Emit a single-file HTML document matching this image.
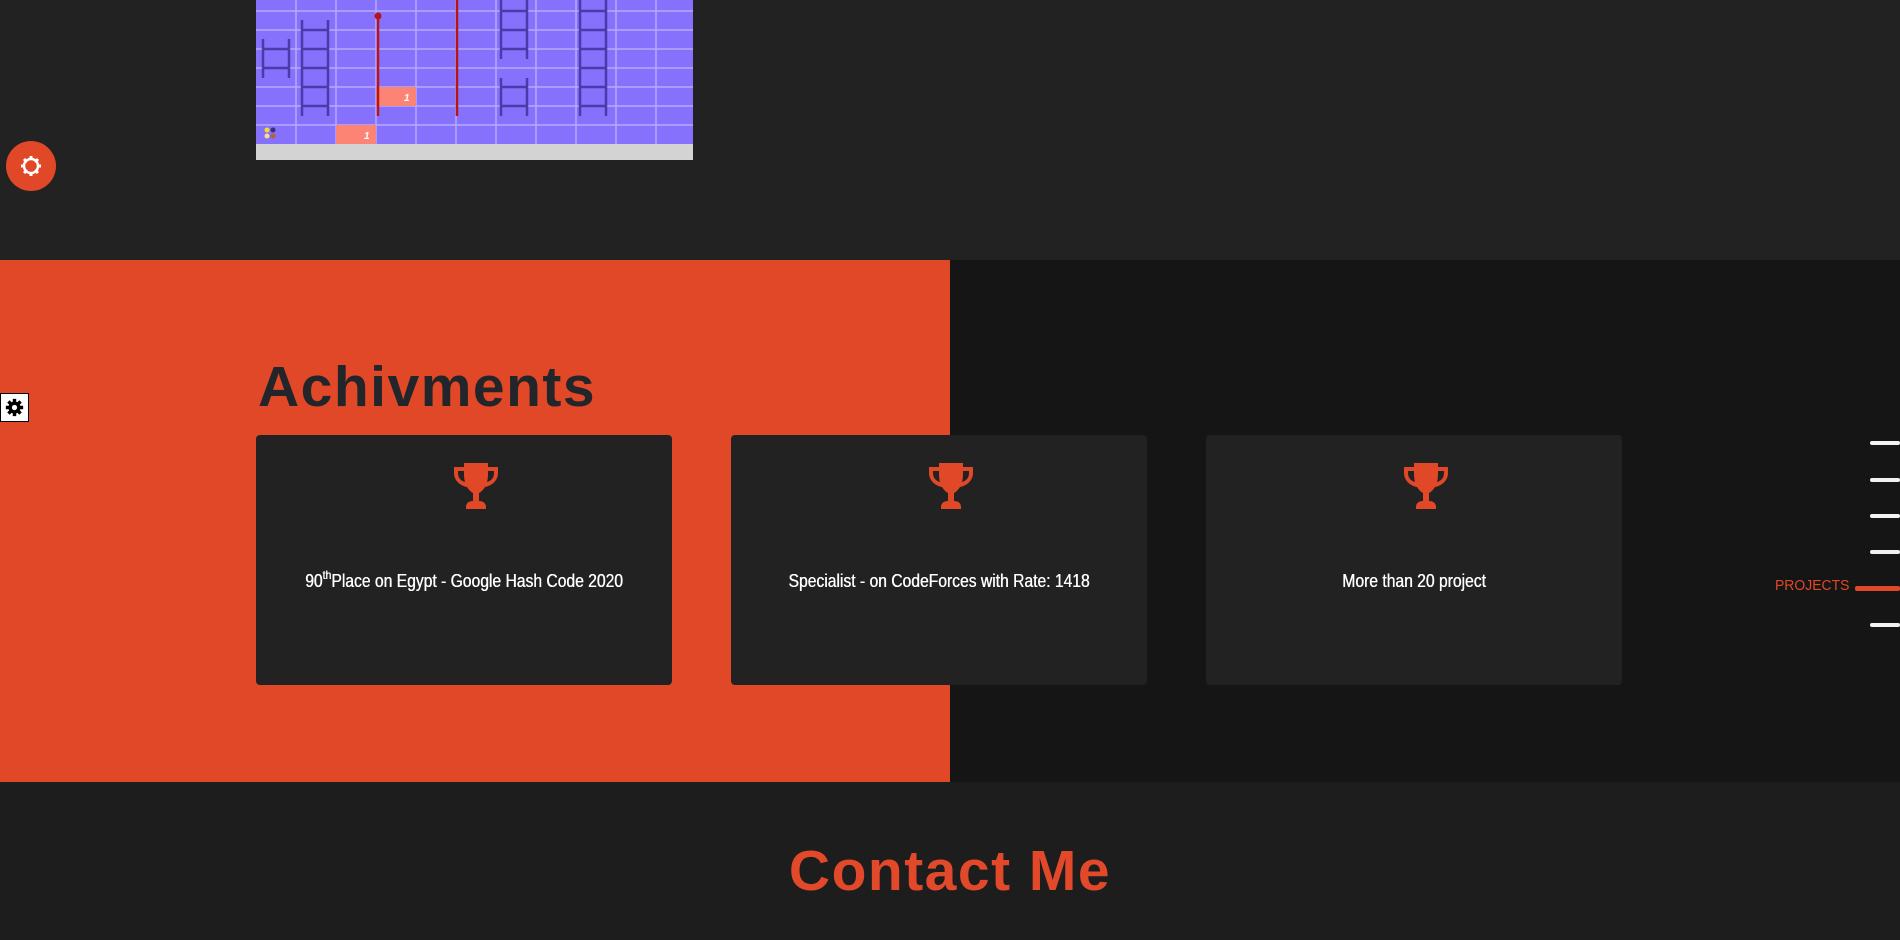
<!DOCTYPE html>
<html><head><meta charset="utf-8"><style>
*{margin:0;padding:0;box-sizing:border-box}
body{width:1900px;height:940px;overflow:hidden;background:#222;font-family:"Liberation Sans",sans-serif;position:relative}
.top{position:absolute;left:0;top:0;width:1900px;height:260px;background:#222}
.ach{position:absolute;left:0;top:260px;width:1900px;height:522px;background:#151515}
.orange{position:absolute;left:0;top:260px;width:950px;height:522px;background:#e14828}
.contact{position:absolute;left:0;top:782px;width:1900px;height:158px;background:#1d1d1d}
h2{position:absolute;left:258px;top:352px;font-size:57px;font-weight:bold;color:#22252a;line-height:70px;letter-spacing:1.5px}
.card{position:absolute;top:435px;width:416px;height:250px;background:#222;border-radius:4px;color:#fff}
.card svg{position:absolute;left:196px;top:28px}
.card p{position:absolute;left:0;right:0;top:134px;text-align:center;font-size:18px;line-height:24px;transform:scaleX(0.87);text-shadow:0.4px 0 0 #fff}
sup{font-size:12px;vertical-align:8px;line-height:0}
.cm{position:absolute;left:0;width:1900px;top:836px;text-align:center;font-size:57px;font-weight:bold;color:#e2492a;line-height:70px;letter-spacing:1.5px}
.nl{position:absolute;right:0;width:30px;height:4px;background:#f2f2f2;border-radius:2px}
</style></head><body>
<div class="top"></div>
<svg style="position:absolute;left:256px;top:0" width="437" height="160" viewBox="0 0 437 160">
<rect width="437" height="160" fill="#8571fc"/>
<g stroke="#b6aaff" stroke-width="1.5">
<line x1="0" y1="11" x2="437" y2="11"/><line x1="0" y1="30" x2="437" y2="30"/><line x1="0" y1="49" x2="437" y2="49"/><line x1="0" y1="68" x2="437" y2="68"/><line x1="0" y1="87" x2="437" y2="87"/><line x1="0" y1="106" x2="437" y2="106"/><line x1="0" y1="125" x2="437" y2="125"/>
<line x1="40" y1="0" x2="40" y2="144"/><line x1="80" y1="0" x2="80" y2="144"/><line x1="120" y1="0" x2="120" y2="144"/><line x1="160" y1="0" x2="160" y2="144"/><line x1="200" y1="0" x2="200" y2="144"/><line x1="240" y1="0" x2="240" y2="144"/><line x1="280" y1="0" x2="280" y2="144"/><line x1="320" y1="0" x2="320" y2="144"/><line x1="360" y1="0" x2="360" y2="144"/><line x1="400" y1="0" x2="400" y2="144"/>
</g>
<rect x="120" y="87" width="40" height="19" fill="#fc8474"/><rect x="80" y="125" width="40" height="19" fill="#fc8474"/>
<text x="148" y="101" fill="#fff" font-size="10" font-style="italic" font-weight="bold">1</text>
<text x="108" y="139" fill="#fff" font-size="10" font-style="italic" font-weight="bold">1</text>
<g stroke="#4c3aa8" stroke-width="2.5" fill="none">
<path d="M7 39V78M33 39V78M7 49H33M7 68H33"/>
<path d="M46 20V116M72 20V116M46 30H72M46 49H72M46 68H72M46 87H72M46 106H72"/>
<path d="M245 0V59M271 0V59M245 11H271M245 30H271M245 49H271"/>
<path d="M245 78V116M271 78V116M245 87H271M245 106H271"/>
<path d="M324 0V116M350 0V116M324 11H350M324 30H350M324 49H350M324 68H350M324 87H350M324 106H350"/>
</g>
<path d="M122 16V116M201 0V116" stroke="#b5141c" stroke-width="2.5"/><circle cx="122" cy="16" r="3.5" fill="#b5141c"/>
<circle cx="11" cy="130" r="2.5" fill="#f5e020"/><circle cx="17" cy="130" r="2.5" fill="#3a2d80"/><circle cx="11" cy="136" r="2.5" fill="#f0e090"/><circle cx="17" cy="136" r="2.5" fill="#b86030"/>
<rect y="144" width="437" height="16" fill="#d3d3d3"/>
</svg>
<div style="position:absolute;left:6px;top:141px;width:50px;height:50px;border-radius:50%;background:#e14828"></div>
<svg style="position:absolute;left:20px;top:155px" width="22" height="22" viewBox="0 0 22 22"><circle cx="11" cy="11" r="7" fill="none" stroke="#fff" stroke-width="2.5"/><g stroke="#fff" stroke-width="3"><path d="M11 1v4M11 17v4M1 11h4M17 11h4M4 4l3 3M15 15l3 3M4 18l3-3M15 7l3-3"/></g></svg>
<div class="ach"></div>
<div class="orange"></div>
<div style="position:absolute;left:0;top:393px;width:29px;height:29px;background:#fff;border:1px solid #000"></div>
<svg style="position:absolute;left:5px;top:398px" width="19" height="19" viewBox="0 0 22 22"><circle cx="11" cy="11" r="7" fill="#000"/><g stroke="#000" stroke-width="4"><path d="M11 1v5M11 16v5M1 11h5M16 11h5M4 4l3 3M15 15l3 3M4 18l3-3M15 7l3-3"/></g><circle cx="11" cy="11" r="3" fill="#fff"/></svg>
<h2>Achivments</h2>
<div class="card" style="left:256px"><svg width="48" height="46" viewBox="0 0 48 46"><path d="M12 0h24v4h10v6c0 8-7 13-13 14-2 3-4 5-6 6v8c4 0 7 2 7 6v2H14v-2c0-4 3-6 7-6v-8c-2-1-4-3-6-6C9 23 2 18 2 10V4h10zM6 8v2c0 5 3 8 7 9-1-3-1-7-1-11zM42 8h-6c0 4 0 8-1 11 4-1 7-4 7-9z" fill="#e14828"/></svg><p>90<sup>th</sup>Place on Egypt - Google Hash Code 2020</p></div>
<div class="card" style="left:731px"><svg width="48" height="46" viewBox="0 0 48 46"><path d="M12 0h24v4h10v6c0 8-7 13-13 14-2 3-4 5-6 6v8c4 0 7 2 7 6v2H14v-2c0-4 3-6 7-6v-8c-2-1-4-3-6-6C9 23 2 18 2 10V4h10zM6 8v2c0 5 3 8 7 9-1-3-1-7-1-11zM42 8h-6c0 4 0 8-1 11 4-1 7-4 7-9z" fill="#e14828"/></svg><p>Specialist - on CodeForces with Rate: 1418</p></div>
<div class="card" style="left:1206px"><svg width="48" height="46" viewBox="0 0 48 46"><path d="M12 0h24v4h10v6c0 8-7 13-13 14-2 3-4 5-6 6v8c4 0 7 2 7 6v2H14v-2c0-4 3-6 7-6v-8c-2-1-4-3-6-6C9 23 2 18 2 10V4h10zM6 8v2c0 5 3 8 7 9-1-3-1-7-1-11zM42 8h-6c0 4 0 8-1 11 4-1 7-4 7-9z" fill="#e14828"/></svg><p>More than 20 project</p></div>
<div class="nl" style="top:441px"></div><div class="nl" style="top:478px"></div><div class="nl" style="top:514px"></div><div class="nl" style="top:550px"></div>
<div class="nl" style="top:586px;width:45px;background:#e14828;height:5px"></div>
<div style="position:absolute;left:1775px;top:577px;font-size:15px;color:#e14828;transform:scaleX(0.93);transform-origin:left">PROJECTS</div>
<div class="nl" style="top:623px"></div>
<div class="contact"></div>
<div class="cm">Contact Me</div>
</body></html>
